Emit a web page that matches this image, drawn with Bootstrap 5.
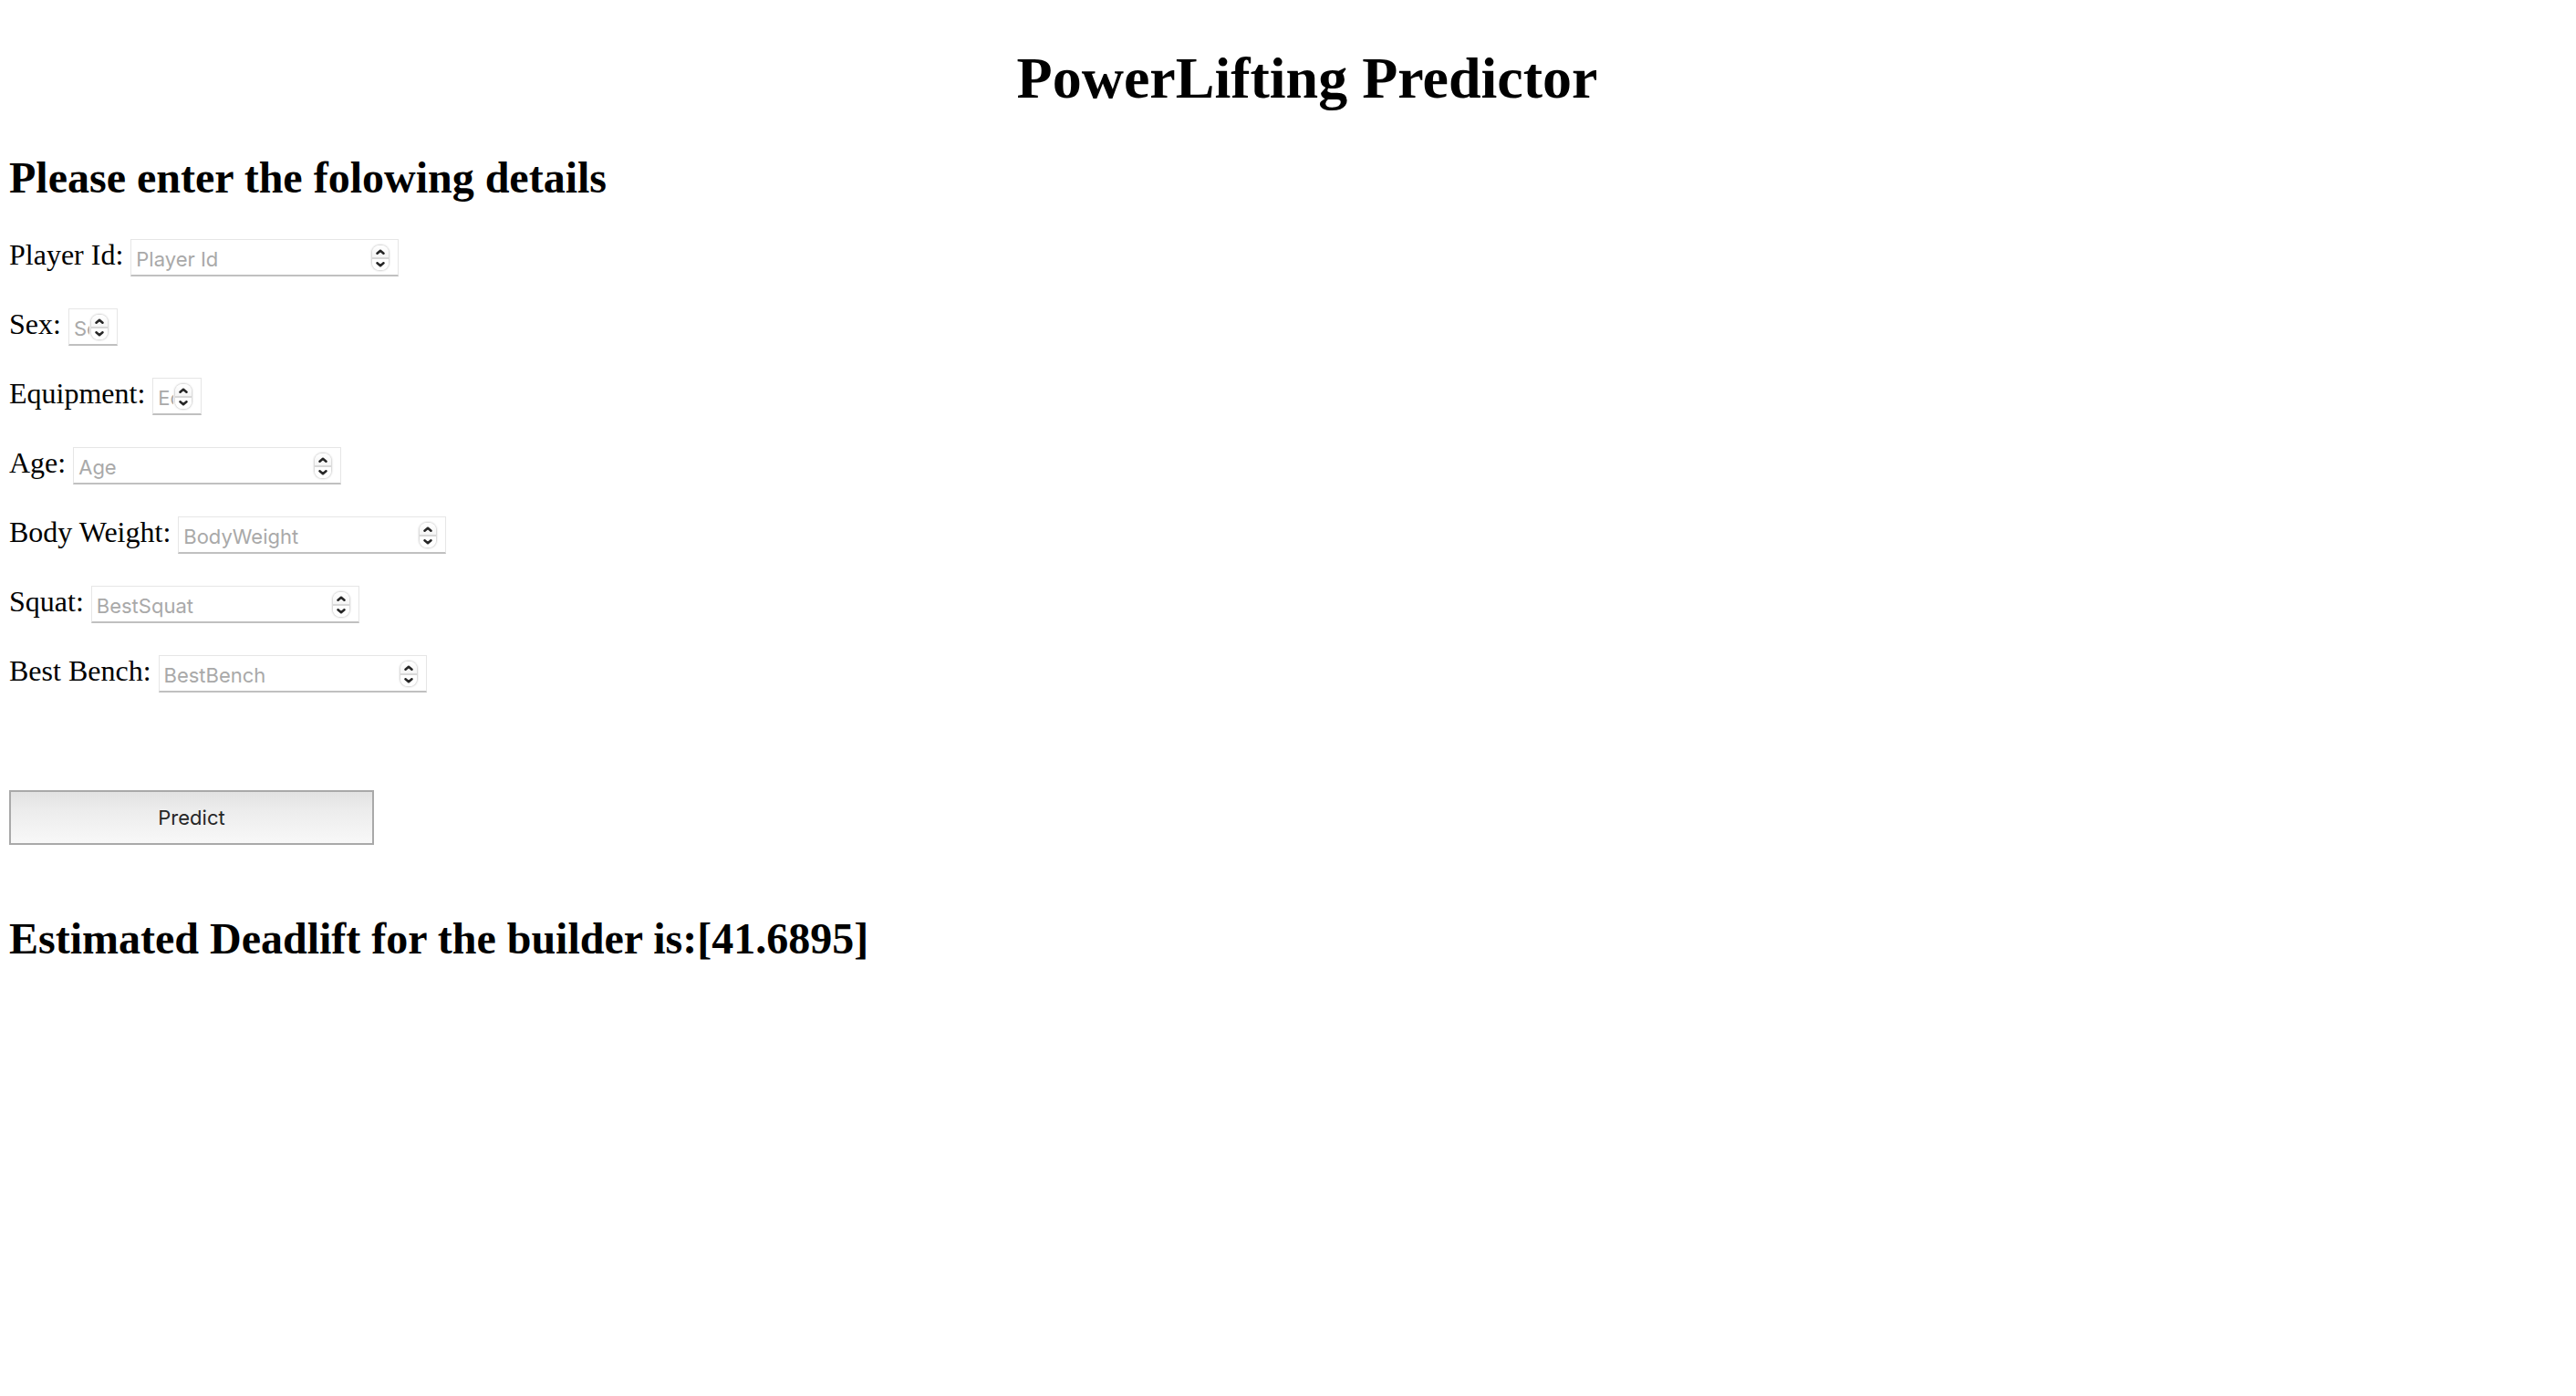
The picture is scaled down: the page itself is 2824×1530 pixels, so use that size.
<!DOCTYPE html>
<html lang="en">
<head>
<meta charset="utf-8">
<meta name="viewport" content="width=device-width, initial-scale=1">
<title>PowerLifting Predictor</title>
<link href="https://cdn.jsdelivr.net/npm/bootstrap@5.3.0/dist/css/bootstrap.min.css" rel="stylesheet">
<style>
  body { font-family: "Liberation Serif", "Times New Roman", serif; font-size: 32px; color: #000; background: #fff; }
  main { padding: 50px 10px; }
  .page-title { font-size: 64px; line-height: 72px; padding-left: 42px; margin-bottom: 46px; }
  .section-title { font-size: 48px; line-height: 54px; }
  .fields { margin-top: 40px; gap: 36px; }
  .field-label { line-height: 34px; }
  .num-input {
    display: block; width: 294px; height: 41px; padding: 4px 30px 0 5px;
    font-family: Inter, sans-serif; font-size: 22px; line-height: 34px; color: #000;
    background: #fff; border: 1px solid #e6e6e6; border-bottom: 2px solid #c0c0c0; border-radius: 0;
    appearance: textfield; -moz-appearance: textfield;
  }
  .num-input.short { width: 54px; }
  .num-input::placeholder { color: #a9a9a9; opacity: 1; }
  .num-input::-webkit-inner-spin-button, .num-input::-webkit-outer-spin-button { -webkit-appearance: none; margin: 0; }
  .stepper {
    top: 7px; right: 11px; width: 18px; height: 27px; border-radius: 8px; overflow: hidden;
    background: #fff; box-shadow: 0 0 2px 1px #d0d0d0;
  }
  .stepper button { flex: 1; border: 0; padding: 0; background: #fff; line-height: 0; }
  .stepper button:first-child { border-bottom: 2px solid #d8d8d8; background: linear-gradient(#fff, #f5f5f5); }
  .stepper svg { width: 10px; height: 6px; fill: none; stroke: #262626; stroke-width: 2.5; stroke-linecap: round; stroke-linejoin: round; }
  .fields .num-row { height: 40px; }
  .predict {
    margin: 108px 0 76px; width: 400px; height: 60px; font-family: Inter, sans-serif; font-size: 22px; color: #262626;
    border: 2px solid #a9a9a9; background: linear-gradient(#e2e2e2, #ececec 35%, #f8f8f8);
  }
</style>
<script src="https://cdn.jsdelivr.net/npm/bootstrap@5.3.0/dist/js/bootstrap.bundle.min.js"></script>
</head>
<body>
<main>
  <h1 class="page-title text-center fw-bold">PowerLifting Predictor</h1>
  <h2 class="section-title fw-bold mb-0">Please enter the folowing details</h2>
  <form onsubmit="return false">
    <div class="fields d-flex flex-column">
      <div class="num-row d-flex align-items-start gap-2">
        <label class="field-label" for="player">Player Id:</label>
        <div class="num-box position-relative"><input class="num-input" type="number" id="player" placeholder="Player Id"></div>
      </div>
      <div class="num-row d-flex align-items-start gap-2">
        <label class="field-label" for="sex">Sex:</label>
        <div class="num-box position-relative"><input class="num-input short" type="number" id="sex" min="0" max="1" placeholder="Sex"></div>
      </div>
      <div class="num-row d-flex align-items-start gap-2">
        <label class="field-label" for="equipment">Equipment:</label>
        <div class="num-box position-relative"><input class="num-input short" type="number" id="equipment" min="0" max="4" placeholder="Equipment"></div>
      </div>
      <div class="num-row d-flex align-items-start gap-2">
        <label class="field-label" for="age">Age:</label>
        <div class="num-box position-relative"><input class="num-input" type="number" id="age" placeholder="Age"></div>
      </div>
      <div class="num-row d-flex align-items-start gap-2">
        <label class="field-label" for="weight">Body Weight:</label>
        <div class="num-box position-relative"><input class="num-input" type="number" id="weight" placeholder="BodyWeight"></div>
      </div>
      <div class="num-row d-flex align-items-start gap-2">
        <label class="field-label" for="squat">Squat:</label>
        <div class="num-box position-relative"><input class="num-input" type="number" id="squat" placeholder="BestSquat"></div>
      </div>
      <div class="num-row d-flex align-items-start gap-2">
        <label class="field-label" for="bench">Best Bench:</label>
        <div class="num-box position-relative"><input class="num-input" type="number" id="bench" placeholder="BestBench"></div>
      </div>
    </div>
    <button class="predict d-block" type="submit">Predict</button>
  </form>
  <h2 class="section-title fw-bold mb-0">Estimated Deadlift for the builder is:[41.6895]</h2>
</main>
<template id="stepper">
  <div class="stepper position-absolute d-flex flex-column">
    <button type="button" tabindex="-1" aria-label="Increase"><svg viewBox="0 0 10 6"><path d="M1.5 4.7 5 1.7l3.5 3"/></svg></button>
    <button type="button" tabindex="-1" aria-label="Decrease"><svg viewBox="0 0 10 6"><path d="M1.5 1.3 5 4.3l3.5-3"/></svg></button>
  </div>
</template>
<script>
  // Give every number box its pair of step buttons
  document.querySelectorAll('.num-box').forEach(function (box) {
    box.append(document.getElementById('stepper').content.cloneNode(true));
    var input = box.querySelector('input');
    var steps = box.querySelectorAll('button');
    steps[0].onclick = function () { input.stepUp(); };
    steps[1].onclick = function () { input.stepDown(); };
  });
</script>
</body>
</html>
